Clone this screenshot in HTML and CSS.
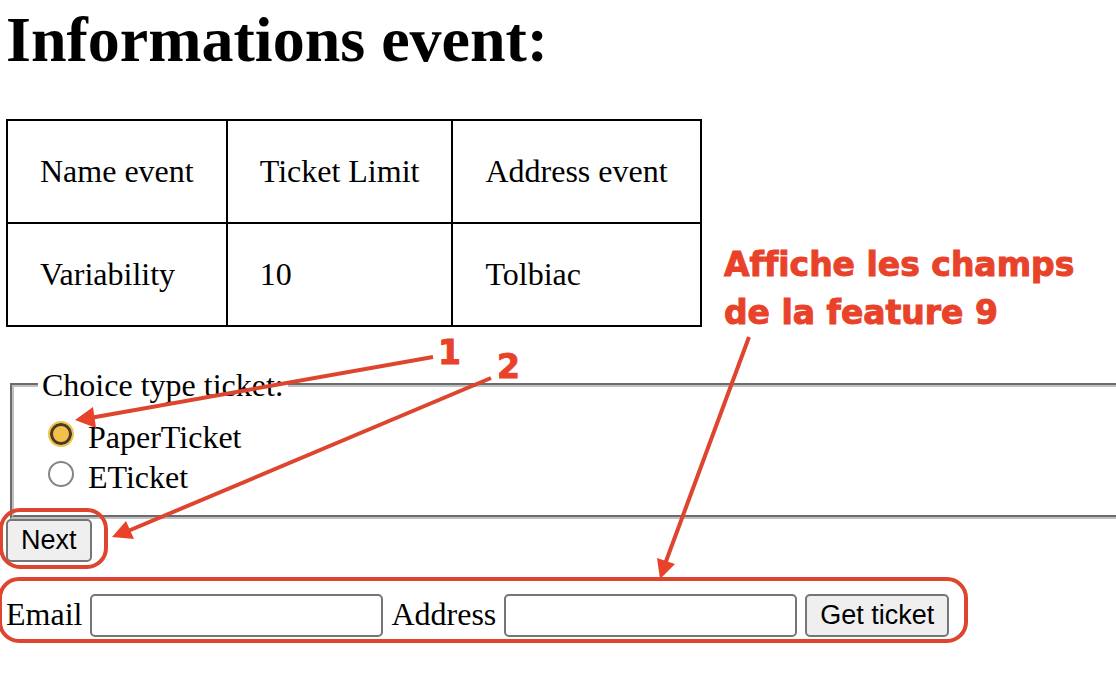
FILE: index.html
```html
<!DOCTYPE html>
<html lang="en">
<head>
<meta charset="utf-8">
<title>Informations event</title>
<link rel="stylesheet" href="styles.css">
</head>
<body>
<main class="page">
  <h1 class="title">Informations event:</h1>
  <table class="event">
    <tr><td>Name event</td><td>Ticket Limit</td><td>Address event</td></tr>
    <tr><td>Variability</td><td>10</td><td>Tolbiac</td></tr>
  </table>
  <form class="choice">
    <fieldset class="types">
      <legend class="legend">Choice type ticket:</legend>
      <div class="option"><input class="radio" type="radio" name="type" id="paper" checked><label for="paper">PaperTicket</label></div>
      <div class="option"><input class="radio" type="radio" name="type" id="eticket"><label for="eticket">ETicket</label></div>
    </fieldset>
    <button class="button" type="button">Next</button>
  </form>
  <form class="details">
    <label for="email">Email</label>
    <input class="field" type="text" id="email">
    <label for="address">Address</label>
    <input class="field" type="text" id="address">
    <button class="button" type="button">Get ticket</button>
  </form>
</main>
<div class="notes">
  <svg class="marks" width="1116" height="698" viewBox="0 0 1116 698" aria-hidden="true">
    <g class="strokes">
      <rect x="1" y="510" width="105" height="57" rx="19"/>
      <rect x="0" y="579" width="966" height="62" rx="19"/>
      <path d="M433 357L90 418M491 378L128 531M749 337L665 564"/>
    </g>
    <path class="heads" d="M75 420L93 407L96 428ZM112 537L126 521L134 539ZM660 579L657 558L675 564Z"/>
  </svg>
  <p class="note note-fields">Affiche les champs<br>de la feature 9</p>
  <span class="note note-one">1</span>
  <span class="note note-two">2</span>
</div>
</body>
</html>
```
FILE: styles.css
```css
body {
  margin: 0;
  position: relative;
  min-height: 100vh;
  overflow: hidden;
  background: #fff;
  color: #000;
  font: 32px/37px "Liberation Serif", "Times New Roman", serif;
}
.page { padding: 3px 0 0 6px; }
.title {
  margin: 0 0 42px;
  font-size: 64px;
  line-height: 74px;
}
.event { border-collapse: collapse; }
.event td {
  padding: 32px;
  border: 2px solid #000;
}
.choice { margin-top: 38px; }
.types {
  margin: 0 -8px 0 4px;
  padding: 13px 24px 18px;
  border: 4px groove #c0c0c0;
}
.legend { padding: 2px 4px 0; }
.option {
  display: flex;
  align-items: flex-start;
  line-height: 40px;
}
.radio {
  appearance: none;
  box-sizing: border-box;
  width: 26px;
  height: 26px;
  margin: 4px 14px 0 10px;
  border: 2px solid #858585;
  border-radius: 50%;
  background: #fff;
}
.radio:checked {
  border-color: #f3c14b;
  background: #f3c14b;
  box-shadow: inset 0 0 0 3px #443b28;
}
.button {
  display: block;
  box-sizing: border-box;
  height: 43px;
  margin: 0;
  padding: 0 13px 2px;
  border: 2px solid #767676;
  border-radius: 5px;
  background: #efefef;
  color: #000;
  font: 27px/36px "Liberation Sans", Arial, sans-serif;
}
.details {
  display: flex;
  align-items: flex-start;
  gap: 8px;
  margin-top: 32px;
  line-height: 40px;
}
.field {
  box-sizing: border-box;
  width: 293px;
  height: 43px;
  padding: 2px 4px;
  border: 2px solid #767676;
  border-radius: 5px;
  background: #fff;
  font: 27px "Liberation Sans", Arial, sans-serif;
}
.notes {
  position: absolute;
  inset: 0;
  pointer-events: none;
  color: #e8432a;
}
.marks { display: block; }
.strokes {
  fill: none;
  stroke: #de452e;
  stroke-width: 4;
}
.heads { fill: #e8432a; }
.note {
  position: absolute;
  margin: 0;
  font: bold 33px/48px "DejaVu Sans", "Arial Black", sans-serif;
  font-variant-ligatures: none;
  -webkit-text-stroke: 1px #e8432a;
  white-space: nowrap;
}
.note-fields { left: 724px; top: 241px; }
.note-one { left: 438px; top: 329px; }
.note-two { left: 497px; top: 343px; }
```
